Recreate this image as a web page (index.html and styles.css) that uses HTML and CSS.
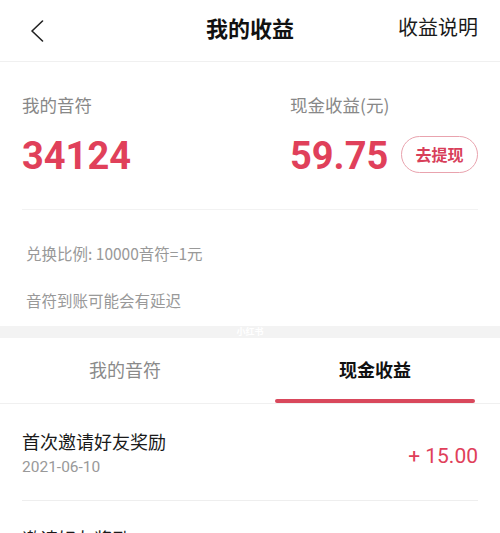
FILE: index.html
```html
<!DOCTYPE html>
<html lang="zh-CN">
<head>
  <meta charset="UTF-8" />
  <title>我的收益</title>
  <link rel="stylesheet" href="styles.css">
</head>
<body>

  <div class="top-bar">
    <span class="back">
      <svg width="14" height="22" viewBox="0 0 14 22">
        <polyline points="12.5,1 2,11 12.5,21" fill="none" stroke="#222" stroke-width="1.6" stroke-linecap="round" stroke-linejoin="round" />
      </svg>
    </span>
    <span class="title">我的收益</span>
    <span class="help">收益说明</span>
  </div>

  <div class="stats">
    <div class="stat">
      <div class="stat-label">我的音符</div>
      <div class="stat-row">
        <span class="stat-num">34124</span>
      </div>
    </div>
    <div class="stat">
      <div class="stat-label">现金收益(元)</div>
      <div class="stat-row">
        <span class="stat-num">59.75</span>
        <button class="withdraw-btn">去提现</button>
      </div>
    </div>
  </div>

  <div class="notes">
    <p>兑换比例: 10000音符=1元</p>
    <p>音符到账可能会有延迟</p>
  </div>

  <div class="band">小红书</div>

  <div class="tabs">
    <div class="tab">我的音符</div>
    <div class="tab active">现金收益</div>
  </div>

  <div class="record">
    <div class="record-info">
      <div class="record-name">首次邀请好友奖励</div>
      <div class="record-date">2021-06-10</div>
    </div>
    <div class="record-amount">+ 15.00</div>
  </div>

  <div class="record">
    <div class="record-info">
      <div class="record-name">邀请好友奖励</div>
      <div class="record-date">2021-06-10</div>
    </div>
    <div class="record-amount">+ 5.00</div>
  </div>

</body>
</html>
```

FILE: styles.css
```css
body {
  margin: 0;
  background-color: #fff;
  color: #111;
  font-family: "Noto Sans CJK SC", "Noto Sans", sans-serif;
  overflow: hidden;
}

.top-bar {
  display: grid;
  grid-template-columns: 1fr auto 1fr;
  align-items: center;
  height: 52px;
  padding: 0 22px 9px;
  border-bottom: 1px solid #f0f0f0;
}

.back {
  display: flex;
  margin-left: 8px;
  padding-top: 10px;
}

.title {
  font-size: 22px;
  font-weight: 700;
  line-height: 30px;
  padding-top: 2px;
}

.help {
  justify-self: end;
  font-size: 20px;
  line-height: 30px;
  padding-top: 2px;
  color: #1a1a1a;
}

.stats {
  display: grid;
  grid-template-columns: 268px 1fr;
  margin: 0 22px;
  padding: 33px 0 31px;
  border-bottom: 1px solid #f2f2f2;
}

.stat-label {
  font-size: 17.5px;
  line-height: 20px;
  color: #888;
}

.stat-row {
  display: flex;
  align-items: center;
  margin-top: 19px;
}

.stat-num {
  font-family: Roboto, "Liberation Sans", sans-serif;
  font-size: 38px;
  font-weight: 700;
  line-height: 44px;
  color: #e0405a;
}

.withdraw-btn {
  margin-left: auto;
  margin-top: -4px;
  width: 77px;
  height: 37px;
  padding: 0;
  border: 1px solid #e9a3ae;
  border-radius: 19px;
  background-color: #fff;
  color: #d8405a;
  font-family: "Noto Sans CJK SC", sans-serif;
  font-size: 16px;
  font-weight: 700;
}

.notes {
  padding: 32px 26px 15px;
}

.notes p {
  margin: 0 0 25px;
  font-size: 15.5px;
  line-height: 22px;
  color: #999;
}

.notes p:last-child {
  margin-bottom: 0;
}

.band {
  height: 12px;
  background-color: #f3f3f3;
  color: #fff;
  font-size: 9px;
  line-height: 12px;
  text-align: center;
  font-weight: 700;
}

.tabs {
  display: grid;
  grid-template-columns: 1fr 1fr;
  border-bottom: 1px solid #f0f0f0;
}

.tab {
  display: flex;
  flex-direction: column;
  align-items: center;
  height: 45px;
  padding-top: 20px;
  font-size: 18px;
  line-height: 22px;
  color: #8a8a8a;
}

.tab.active {
  color: #111;
  font-weight: 700;
}

.tab.active::after {
  content: "";
  width: 200px;
  height: 4px;
  margin-top: auto;
  border-radius: 2px;
  background-color: #d9485c;
}

.record {
  display: flex;
  align-items: center;
  margin: 0 22px;
  padding: 25px 0 23px;
  border-bottom: 1px solid #eee;
}

.record-info {
  flex: 1;
}

.record-name {
  font-size: 18px;
  line-height: 24px;
  color: #1a1a1a;
}

.record-date {
  margin-top: 4px;
  font-family: Roboto, "Liberation Sans", sans-serif;
  font-size: 15.5px;
  line-height: 20px;
  color: #999;
}

.record-amount {
  margin-top: 6px;
  font-family: Roboto, "Liberation Sans", sans-serif;
  font-size: 21px;
  color: #e0405a;
}
```
